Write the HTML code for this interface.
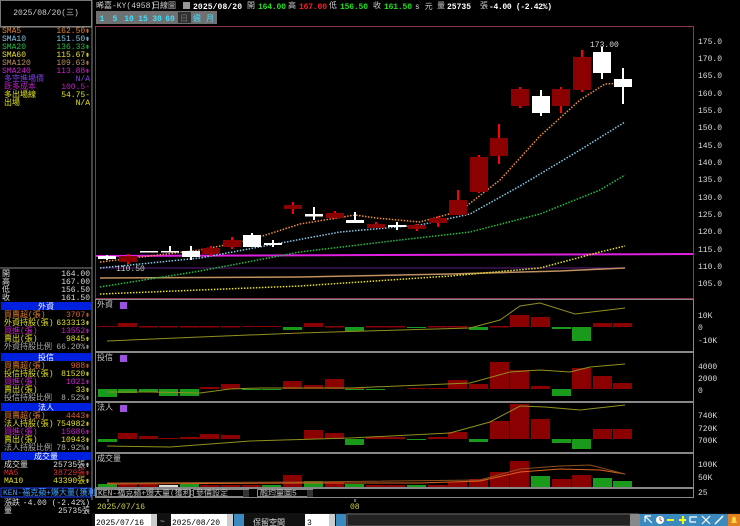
<!DOCTYPE html>
<html><head><meta charset="utf-8"><style>
html,body{margin:0;padding:0;background:#000;width:740px;height:526px;overflow:hidden}
svg{display:block}
text{font-family:"Liberation Mono","WenQuanYi Zen Hei","Noto Sans CJK TC",monospace;font-size:8px}
</style></head><body>
<svg width="740" height="526" viewBox="0 0 740 526">
<rect width="740" height="526" fill="#000"/>
<!-- left panel -->
<rect x="0.5" y="0.5" width="91" height="26" fill="#000" stroke="#777" stroke-width="1"/>
<text x="46" y="15" fill="#ccc" text-anchor="middle" font-size="7.5">2025/08/20(三)</text>
<line x1="92" y1="0" x2="92" y2="500" stroke="#888"/>
<line x1="0" y1="27" x2="92" y2="27" stroke="#888"/>
<g font-size="7">
<text x="2" y="33" fill="#e08030">SMA5</text><text x="90" y="33" fill="#e08030" text-anchor="end">162.50⇞</text>
<text x="2" y="41" fill="#88c8e8">SMA10</text><text x="90" y="41" fill="#88c8e8" text-anchor="end">151.50⇞</text>
<text x="2" y="49" fill="#20c040">SMA20</text><text x="90" y="49" fill="#20c040" text-anchor="end">136.33⇞</text>
<text x="2" y="57" fill="#e8e020">SMA60</text><text x="90" y="57" fill="#e8e020" text-anchor="end">115.67⇞</text>
<text x="2" y="65" fill="#c09060">SMA120</text><text x="90" y="65" fill="#c09060" text-anchor="end">109.63⇞</text>
<text x="2" y="73" fill="#d020d0">SMA240</text><text x="90" y="73" fill="#d020d0" text-anchor="end">113.88⇞</text>
<text x="4" y="81" fill="#8040e0">多空進場價</text><text x="90" y="81" fill="#8040e0" text-anchor="end">N/A</text>
<text x="4" y="89" fill="#c020c0">既多成本</text><text x="90" y="89" fill="#c020c0" text-anchor="end">100.5-</text>
<text x="4" y="97" fill="#e0e020">多出場線</text><text x="90" y="97" fill="#e0e020" text-anchor="end">54.75-</text>
<text x="4" y="105" fill="#e0e020">出場</text><text x="90" y="105" fill="#e0e020" text-anchor="end">N/A</text>
</g>
<line x1="0" y1="268" x2="92" y2="268" stroke="#888"/>
<g font-size="7" fill="#ddd">
<text x="2" y="276">開</text><text x="90" y="276" text-anchor="end">164.00</text>
<text x="2" y="284">高</text><text x="90" y="284" text-anchor="end">167.00</text>
<text x="2" y="292">低</text><text x="90" y="292" text-anchor="end">156.50</text>
<text x="2" y="300">收</text><text x="90" y="300" text-anchor="end">161.50</text>
</g>
<g font-size="7">
<rect x="1" y="302" width="90" height="8" fill="#0020e0"/><text x="46" y="309" fill="#fff" text-anchor="middle">外資</text>
<text x="4" y="317" fill="#e08030">買賣超(張)</text><text x="90" y="317" fill="#e06030" text-anchor="end">3707⇞</text>
<text x="4" y="325" fill="#e0e020">外資持股(張)</text><text x="90" y="325" fill="#e0e020" text-anchor="end">633313⇞</text>
<text x="4" y="333" fill="#d020d0">買進(張)</text><text x="90" y="333" fill="#d020d0" text-anchor="end">13552⇟</text>
<text x="4" y="341" fill="#e0e020">賣出(張)</text><text x="90" y="341" fill="#e0e020" text-anchor="end">9845⇟</text>
<text x="4" y="349" fill="#aaa">外資持股比例</text><text x="90" y="349" fill="#aaa" text-anchor="end">66.20%⇞</text>
<rect x="1" y="353" width="90" height="8" fill="#0020e0"/><text x="46" y="360" fill="#fff" text-anchor="middle">投信</text>
<text x="4" y="368" fill="#e08030">買賣超(張)</text><text x="90" y="368" fill="#e06030" text-anchor="end">988⇞</text>
<text x="4" y="376" fill="#e0e020">投信持股(張)</text><text x="90" y="376" fill="#e0e020" text-anchor="end">81520⇞</text>
<text x="4" y="384" fill="#d020d0">買進(張)</text><text x="90" y="384" fill="#d020d0" text-anchor="end">1021⇟</text>
<text x="4" y="392" fill="#e0e020">賣出(張)</text><text x="90" y="392" fill="#e0e020" text-anchor="end">33⇟</text>
<text x="4" y="400" fill="#aaa">投信持股比例</text><text x="90" y="400" fill="#aaa" text-anchor="end">8.52%⇞</text>
<rect x="1" y="403" width="90" height="8" fill="#0020e0"/><text x="46" y="410" fill="#fff" text-anchor="middle">法人</text>
<text x="4" y="418" fill="#e08030">買賣超(張)</text><text x="90" y="418" fill="#e06030" text-anchor="end">4443⇞</text>
<text x="4" y="426" fill="#e0e020">法人持股(張)</text><text x="90" y="426" fill="#e0e020" text-anchor="end">754982⇞</text>
<text x="4" y="434" fill="#d020d0">買進(張)</text><text x="90" y="434" fill="#d020d0" text-anchor="end">15686⇟</text>
<text x="4" y="442" fill="#e0e020">賣出(張)</text><text x="90" y="442" fill="#e0e020" text-anchor="end">10943⇟</text>
<text x="4" y="450" fill="#aaa">法人持股比例</text><text x="90" y="450" fill="#aaa" text-anchor="end">78.92%⇞</text>
<rect x="1" y="452" width="90" height="8" fill="#0020e0"/><text x="46" y="459" fill="#fff" text-anchor="middle">成交量</text>
<text x="4" y="467" fill="#ddd">成交量</text><text x="90" y="467" fill="#ddd" text-anchor="end">25735張⇟</text>
<text x="4" y="475" fill="#e03030">MA5</text><text x="90" y="475" fill="#e03030" text-anchor="end">38729張⇟</text>
<text x="4" y="483" fill="#e0e020">MA10</text><text x="90" y="483" fill="#e0e020" text-anchor="end">43390張⇟</text>
<rect x="1" y="488" width="90" height="9" fill="#000" stroke="#2040ff"/><text x="3" y="495" fill="#40a0ff" font-size="6.5">KEN-福克蘋+爆大量(獲利3UP)</text>
<text x="4" y="505" fill="#ddd">漲跌</text><text x="90" y="505" fill="#ddd" text-anchor="end">-4.00 (-2.42%)</text>
<text x="4" y="513" fill="#ddd">量</text><text x="90" y="513" fill="#ddd" text-anchor="end">25735張</text>
</g>
<!-- top header -->
<g font-size="7.5">
<text x="96" y="8" fill="#ccc">晞嘉-KY(4958)</text>
<text x="152" y="8" fill="#ccc">日線圖</text>
<rect x="183" y="2" width="7" height="7" fill="#999"/>
<text x="193" y="9" fill="#fff" font-weight="bold" font-family="Liberation Sans" font-size="9.5" textLength="49">2025/08/20</text>
<text x="247" y="8" fill="#ccc">開</text><text x="258" y="9" fill="#20e020" font-weight="bold" font-family="Liberation Sans" font-size="9" textLength="28">164.00</text>
<text x="288" y="8" fill="#ccc">高</text><text x="299" y="9" fill="#ff2020" font-weight="bold" font-family="Liberation Sans" font-size="9" textLength="28">167.00</text>
<text x="329" y="8" fill="#ccc">低</text><text x="340" y="9" fill="#20e020" font-weight="bold" font-family="Liberation Sans" font-size="9" textLength="28">156.50</text>
<text x="373" y="8" fill="#ccc">收</text><text x="384" y="9" fill="#20e020" font-weight="bold" font-family="Liberation Sans" font-size="9" textLength="28">161.50</text>
<text x="415" y="9" fill="#ccc">s 元</text>
<text x="437" y="8" fill="#ccc">量</text><text x="447" y="9" fill="#fff" font-weight="bold" font-family="Liberation Sans" font-size="9">25735</text>
<text x="480" y="8" fill="#ccc">張</text><text x="489" y="9" fill="#fff" font-weight="bold" font-family="Liberation Sans" font-size="9" textLength="63">-4.00 (-2.42%)</text>
</g>
<g font-size="8" font-weight="bold">
<rect x="96" y="11" width="121" height="13" fill="#707070"/>
<text x="102" y="21" fill="#40e0ff" text-anchor="middle">1</text>
<text x="115" y="21" fill="#40e0ff" text-anchor="middle">5</text>
<text x="129" y="21" fill="#40e0ff" text-anchor="middle">10</text>
<text x="143" y="21" fill="#40e0ff" text-anchor="middle">15</text>
<text x="157" y="21" fill="#40e0ff" text-anchor="middle">30</text>
<text x="170" y="21" fill="#40e0ff" text-anchor="middle">60</text>
<rect x="178" y="12" width="13" height="11" fill="#303030"/><text x="184" y="21" fill="#777" text-anchor="middle" font-weight="normal">日</text>
<text x="197" y="21" fill="#40e0ff" text-anchor="middle" font-weight="normal">週</text>
<text x="210" y="21" fill="#40e0ff" text-anchor="middle" font-weight="normal">月</text>
</g>
<!-- panels borders -->
<g fill="none" stroke="#8a3555" stroke-width="1">
<rect x="95.5" y="26.5" width="598" height="272"/>
</g>
<g fill="none" stroke="#888" stroke-width="1">
<rect x="95.5" y="299.5" width="598" height="52"/>
<rect x="95.5" y="352.5" width="598" height="49"/>
<rect x="95.5" y="402.5" width="598" height="50"/>
<rect x="95.5" y="453.5" width="598" height="34"/>
<rect x="95.5" y="488.5" width="598" height="9"/>
</g>
<!-- right axis -->
<g fill="#ddd" font-size="8" font-family="Liberation Sans">
<text x="698" y="44">175.0</text><text x="698" y="61">170.0</text><text x="698" y="78">165.0</text><text x="698" y="96">160.0</text>
<text x="698" y="113">155.0</text><text x="698" y="130">150.0</text><text x="698" y="148">145.0</text><text x="698" y="165">140.0</text>
<text x="698" y="182">135.0</text><text x="698" y="200">130.0</text><text x="698" y="217">125.0</text><text x="698" y="234">120.0</text>
<text x="698" y="252">115.0</text><text x="698" y="269">110.0</text><text x="698" y="286">105.0</text>
<text x="698" y="318">10K</text><text x="698" y="330">0</text><text x="698" y="343">-10K</text>
<text x="698" y="369">4000</text><text x="698" y="381">2000</text><text x="698" y="393">0</text>
<text x="698" y="418">740K</text><text x="698" y="431">720K</text><text x="698" y="443">700K</text>
<text x="698" y="467">100K</text><text x="698" y="480">50K</text>
<text x="698" y="495">25</text>
</g>
<!-- MAs -->
<polyline points="96,256 693,254" fill="none" stroke="#e020e0" stroke-width="2"/>
<polyline points="100,268 625,268" fill="none" stroke="#602080" stroke-width="1"/>
<polyline points="100,278 300,277 450,274 560,271 625,268" fill="none" stroke="#c09060" stroke-width="1.5"/>
<polyline points="100,294 300,286 450,276 540,268 600,252 625,246" fill="none" stroke="#e8e020" stroke-width="1.5" stroke-dasharray="1.5 1.5"/>
<polyline points="100,287 200,271 300,252 400,240 470,232 540,214 600,190 625,175" fill="none" stroke="#20c040" stroke-width="1.5" stroke-dasharray="1.5 1.5"/>
<polyline points="100,268 200,258 270,245 340,232 420,225 470,214 520,186 580,150 625,122" fill="none" stroke="#88c8e8" stroke-width="1.5" stroke-dasharray="1.5 1.5"/>
<polyline points="100,262 200,250 250,240 300,224 355,215 376,218 420,222 460,211 500,180 540,136 580,100 605,84 625,83" fill="none" stroke="#f09040" stroke-width="1.5" stroke-dasharray="1.5 1.5"/>
<!-- candles -->
<g stroke-width="2">
<line x1="107" y1="255" x2="107" y2="260" stroke="#fff"/><rect x="98" y="256" width="18" height="3" fill="#fff"/>
<line x1="128" y1="254" x2="128" y2="264" stroke="#f00"/><rect x="119" y="256" width="18" height="6" fill="#8b0000"/>
<rect x="140" y="251" width="18" height="1.5" fill="#fff"/>
<line x1="170" y1="246" x2="170" y2="252" stroke="#fff"/><rect x="161" y="251" width="18" height="1.5" fill="#fff"/>
<line x1="191" y1="246" x2="191" y2="260" stroke="#fff"/><rect x="182" y="251" width="18" height="6" fill="#fff"/>
<line x1="211" y1="246" x2="211" y2="256" stroke="#f00"/><rect x="202" y="248" width="18" height="6" fill="#8b0000"/>
<line x1="232" y1="237" x2="232" y2="249" stroke="#f00"/><rect x="223" y="240" width="18" height="7" fill="#8b0000"/>
<line x1="252" y1="233" x2="252" y2="247" stroke="#fff"/><rect x="243" y="235" width="18" height="12" fill="#fff"/>
<line x1="273" y1="240" x2="273" y2="247" stroke="#fff"/><rect x="264" y="243" width="18" height="2" fill="#fff"/>
<line x1="293" y1="202" x2="293" y2="214" stroke="#f00"/><rect x="284" y="205" width="18" height="4" fill="#8b0000"/>
<line x1="314" y1="207" x2="314" y2="220" stroke="#fff"/><rect x="305" y="214" width="18" height="2.5" fill="#fff"/>
<line x1="335" y1="211" x2="335" y2="219" stroke="#f00"/><rect x="326" y="213" width="18" height="5" fill="#8b0000"/>
<line x1="355" y1="212" x2="355" y2="223" stroke="#fff"/><rect x="346" y="220" width="18" height="3" fill="#fff"/>
<line x1="376" y1="222" x2="376" y2="228" stroke="#f00"/><rect x="367" y="224" width="18" height="4" fill="#8b0000"/>
<line x1="397" y1="222" x2="397" y2="230" stroke="#fff"/><rect x="388" y="225" width="18" height="2" fill="#fff"/>
<line x1="417" y1="224" x2="417" y2="231" stroke="#f00"/><rect x="408" y="225" width="18" height="4" fill="#8b0000"/>
<line x1="438" y1="216" x2="438" y2="227" stroke="#f00"/><rect x="429" y="218" width="18" height="5" fill="#8b0000"/>
<line x1="458" y1="190" x2="458" y2="215" stroke="#f00"/><rect x="449" y="200" width="18" height="15" fill="#8b0000"/>
<line x1="479" y1="155" x2="479" y2="193" stroke="#f00"/><rect x="470" y="157" width="18" height="35" fill="#8b0000"/>
<line x1="499" y1="124" x2="499" y2="164" stroke="#f00"/><rect x="490" y="138" width="18" height="18" fill="#8b0000"/>
<line x1="520" y1="87" x2="520" y2="108" stroke="#f00"/><rect x="511" y="89" width="18" height="17" fill="#8b0000"/>
<line x1="541" y1="90" x2="541" y2="116" stroke="#fff"/><rect x="532" y="96" width="18" height="17" fill="#fff"/>
<line x1="561" y1="87" x2="561" y2="113" stroke="#f00"/><rect x="552" y="89" width="18" height="17" fill="#8b0000"/>
<line x1="582" y1="50" x2="582" y2="92" stroke="#f00"/><rect x="573" y="57" width="18" height="33" fill="#8b0000"/>
<line x1="602" y1="47" x2="602" y2="79" stroke="#fff"/><rect x="593" y="52" width="18" height="21" fill="#fff"/>
<line x1="623" y1="68" x2="623" y2="104" stroke="#fff"/><rect x="614" y="79" width="18" height="8" fill="#fff"/>
</g>
<text x="590" y="47" fill="#ddd" font-family="Liberation Sans" font-size="8">173.00</text>
<text x="116" y="271" fill="#ccc" font-family="Liberation Sans" font-size="8">110.50</text>
<!-- subpanel labels -->
<g font-size="7" fill="#ccc">
<text x="97" y="307">外資</text><rect x="120" y="302" width="7" height="7" fill="#a050e0"/>
<text x="97" y="360">投信</text><rect x="120" y="355" width="7" height="7" fill="#a050e0"/>
<text x="97" y="410">法人</text><rect x="120" y="405" width="7" height="7" fill="#a050e0"/>
<text x="97" y="461">成交量</text>
</g>
<!-- 外資 bars zero 327 -->
<g fill="#8b0000">
<rect x="98" y="326" width="19" height="1"/><rect x="118" y="323" width="19" height="4"/>
<rect x="139" y="326" width="19" height="1.5"/><rect x="159" y="326" width="19" height="1.5"/><rect x="180" y="326" width="19" height="1.5"/>
<rect x="200" y="326" width="19" height="1.5"/><rect x="221" y="326" width="19" height="1.5"/><rect x="242" y="326" width="19" height="1"/><rect x="262" y="326" width="19" height="1"/>
<rect x="304" y="323" width="19" height="4"/><rect x="325" y="326" width="19" height="1.5"/>
<rect x="366" y="326" width="19" height="1.5"/><rect x="386" y="326" width="19" height="1.5"/>
<rect x="428" y="326" width="19" height="1.5"/><rect x="448" y="326" width="19" height="1.5"/><rect x="490" y="326" width="19" height="1.5"/>
<rect x="510" y="315" width="19" height="12"/><rect x="531" y="317" width="19" height="10"/>
<rect x="593" y="323" width="19" height="4"/><rect x="613" y="323" width="19" height="4"/>
</g>
<g fill="#1a9a1a">
<rect x="283" y="327" width="19" height="3"/><rect x="345" y="327" width="19" height="4"/><rect x="407" y="327" width="19" height="1"/>
<rect x="469" y="327" width="19" height="3"/><rect x="552" y="327" width="19" height="2"/><rect x="572" y="327" width="19" height="14"/>
</g>
<polyline points="107,341 200,337 300,333 400,330 470,328 500,320 520,306 540,303 575,314 625,308" fill="none" stroke="#909020" stroke-width="1"/>
<!-- 投信 zero 389 -->
<g fill="#1a9a1a">
<rect x="98" y="389" width="19" height="8"/><rect x="118" y="389" width="19" height="4"/><rect x="139" y="389" width="19" height="3"/>
<rect x="159" y="389" width="19" height="7"/><rect x="180" y="389" width="19" height="7"/>
<rect x="242" y="389" width="19" height="1"/><rect x="262" y="389" width="19" height="1"/>
<rect x="345" y="389" width="19" height="1"/><rect x="366" y="389" width="19" height="1"/><rect x="552" y="389" width="19" height="7"/>
</g>
<g fill="#8b0000">
<rect x="200" y="387" width="19" height="2"/><rect x="221" y="384" width="19" height="5"/>
<rect x="283" y="381" width="19" height="8"/><rect x="304" y="385" width="19" height="4"/><rect x="325" y="379" width="19" height="10"/><rect x="345" y="388" width="19" height="1"/>
<rect x="407" y="388" width="19" height="1"/><rect x="428" y="388" width="19" height="1"/>
<rect x="448" y="380" width="19" height="9"/><rect x="469" y="384" width="19" height="5"/>
<rect x="490" y="362" width="19" height="27"/><rect x="510" y="370" width="19" height="19"/><rect x="531" y="386" width="19" height="3"/>
<rect x="572" y="368" width="19" height="21"/><rect x="593" y="376" width="19" height="13"/><rect x="613" y="383" width="19" height="6"/>
</g>
<polyline points="107,392 150,392 200,393 230,389 260,388 350,388 470,383 510,372 540,370 570,372 590,367 625,364" fill="none" stroke="#909020" stroke-width="1"/>
<!-- 法人 base 439 -->
<g fill="#8b0000">
<rect x="118" y="433" width="19" height="6"/><rect x="139" y="436" width="19" height="3"/><rect x="159" y="438" width="19" height="1"/><rect x="180" y="437" width="19" height="2"/>
<rect x="200" y="434" width="19" height="5"/><rect x="221" y="435" width="19" height="4"/>
<rect x="304" y="430" width="19" height="9"/><rect x="325" y="433" width="19" height="6"/>
<rect x="366" y="437" width="19" height="2"/><rect x="386" y="437" width="19" height="2"/><rect x="428" y="437" width="19" height="2"/>
<rect x="448" y="432" width="19" height="7"/><rect x="490" y="421" width="19" height="18"/><rect x="510" y="404" width="19" height="35"/>
<rect x="531" y="419" width="19" height="20"/><rect x="593" y="429" width="19" height="10"/><rect x="613" y="429" width="19" height="10"/>
</g>
<g fill="#1a9a1a">
<rect x="98" y="439" width="19" height="3"/><rect x="345" y="439" width="19" height="6"/><rect x="407" y="439" width="19" height="1"/>
<rect x="469" y="439" width="19" height="3"/><rect x="552" y="439" width="19" height="4"/><rect x="572" y="439" width="19" height="10"/>
</g>
<polyline points="107,446 170,447 250,441 350,438 450,433 490,422 520,406 545,407 580,410 625,405" fill="none" stroke="#909020" stroke-width="1"/>
<!-- volume base 487 -->
<g fill="#8b0000">
<rect x="118" y="484" width="19" height="3"/><rect x="139" y="484" width="19" height="3"/><rect x="180" y="485" width="19" height="2"/><rect x="200" y="485" width="19" height="2"/>
<rect x="221" y="485" width="19" height="2"/><rect x="242" y="485" width="19" height="2"/><rect x="283" y="475" width="19" height="12"/><rect x="325" y="482" width="19" height="5"/>
<rect x="366" y="485" width="19" height="2"/><rect x="386" y="485" width="19" height="2"/><rect x="428" y="485" width="19" height="2"/>
<rect x="448" y="482" width="19" height="5"/><rect x="469" y="479" width="19" height="8"/><rect x="490" y="472" width="19" height="15"/>
<rect x="510" y="461" width="19" height="26"/><rect x="552" y="479" width="19" height="8"/><rect x="572" y="475" width="19" height="12"/>
</g>
<g fill="#1a9a1a">
<rect x="98" y="484" width="19" height="3"/><rect x="180" y="484" width="19" height="3"/><rect x="262" y="485" width="19" height="2"/>
<rect x="304" y="481" width="19" height="6"/><rect x="345" y="484" width="19" height="3"/><rect x="407" y="485" width="19" height="2"/>
<rect x="531" y="476" width="19" height="11"/><rect x="593" y="478" width="19" height="9"/><rect x="613" y="481" width="19" height="6"/>
</g>
<rect x="159" y="485" width="19" height="2" fill="#ddd"/>
<polyline points="107,484 300,483 420,483 480,481 520,472 560,469 600,470 625,474" fill="none" stroke="#e06020" stroke-width="1"/>
<polyline points="107,483 300,482 480,480 520,469 560,466 590,465 625,474" fill="none" stroke="#8a5020" stroke-width="1"/>
<!-- selector row -->
<g font-size="6.5" fill="#bbb">
<rect x="96.5" y="489.5" width="94" height="7" fill="#000" stroke="#888"/><text x="98" y="495.5">KEN-福克蘋+爆大量(獲利3UP)</text>
<rect x="193.5" y="489.5" width="55" height="7" fill="#000" stroke="#888"/><text x="196" y="495.5">參價設定</text><rect x="243" y="490" width="6" height="7" fill="#333"/>
<rect x="257.5" y="489.5" width="55" height="7" fill="#000" stroke="#888"/><text x="260" y="495.5">融均量圖5</text><rect x="307" y="490" width="6" height="7" fill="#333"/>
</g>
<!-- dates -->
<line x1="108" y1="499" x2="108" y2="502" stroke="#ccc"/>
<line x1="355" y1="499" x2="355" y2="502" stroke="#ccc"/>
<text x="97" y="509" fill="#d0d040" font-size="7.5" font-family="Liberation Sans">2025/07/16</text>
<text x="350" y="509" fill="#d0d040" font-size="7.5" font-family="Liberation Sans">08</text>
<!-- bottom controls -->
<rect x="92" y="513" width="648" height="13" fill="#111"/>
<rect x="95" y="514" width="62" height="12" fill="#fff"/><text x="96" y="525" fill="#000" font-family="Liberation Serif" font-size="11">2025/07/16</text>
<rect x="151" y="514" width="6" height="12" fill="#ccc"/>
<text x="160" y="524" fill="#ccc" font-size="9">~</text>
<rect x="171" y="514" width="62" height="12" fill="#fff"/><text x="172" y="525" fill="#000" font-family="Liberation Serif" font-size="11">2025/08/20</text>
<rect x="227" y="514" width="6" height="12" fill="#ccc"/>
<rect x="234" y="514" width="10" height="12" fill="#3a8ac0"/>
<text x="253" y="525" fill="#ddd" font-size="11">保留空間</text>
<rect x="305" y="514" width="30" height="12" fill="#fff"/><text x="307" y="525" fill="#000" font-family="Liberation Serif" font-size="11">3</text>
<rect x="329" y="514" width="6" height="12" fill="#ccc"/>
<rect x="336" y="514" width="10" height="12" fill="#3a8ac0"/>
<rect x="347" y="514" width="291" height="12" fill="#222" stroke="#666"/>
<rect x="630" y="514" width="10" height="12" fill="#888"/>
<rect x="640" y="514" width="88" height="12" fill="#3a8ac0"/>
<path d="M645 516 L651 516 M645 516 L645 522 M645 516 L652 523" stroke="#fff" stroke-width="1.2" fill="none"/>
<circle cx="660" cy="520" r="4" fill="#fff"/><path d="M660 517 L660 520 L662 521" stroke="#e04020" fill="none"/>
<rect x="667" y="519" width="7" height="2" fill="#ff0"/>
<rect x="679" y="519" width="7" height="2" fill="#ff0"/><rect x="682" y="516" width="2" height="8" fill="#ff0"/>
<path d="M690 522 L690 517 L697 517 M690 522 L696 522" stroke="#fff" stroke-width="1.2" fill="none"/>
<path d="M702 516 L710 524 M710 516 L702 524" stroke="#fff" stroke-width="1.2"/>
<path d="M715 524 L723 516" stroke="#fff" stroke-width="1.5"/>
<rect x="728" y="514" width="12" height="12" fill="#e08020"/>
<path d="M731 523 L737 523 L736 521 L736 518 Q734 515 732 518 L732 521 Z" fill="#ffd040"/>
</svg>
</body></html>
